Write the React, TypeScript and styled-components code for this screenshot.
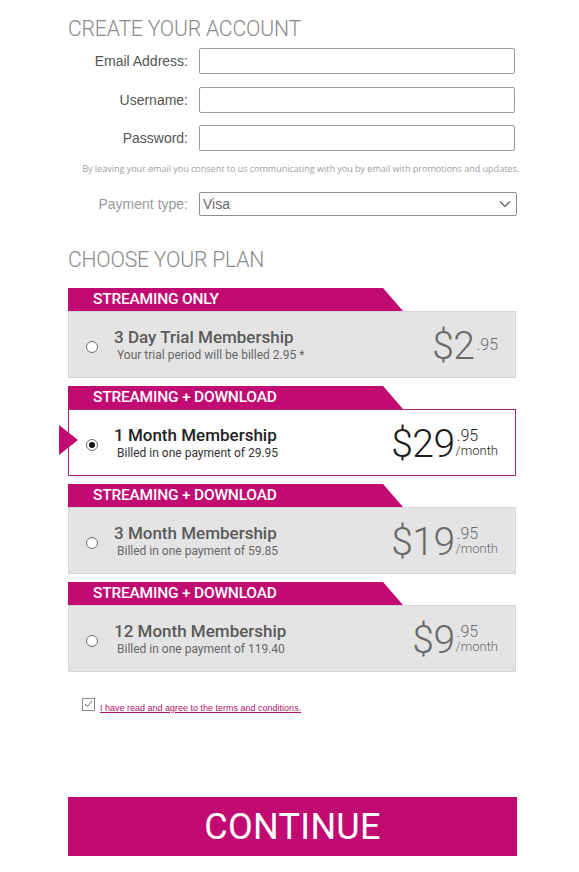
import React from "react";
import styled, { createGlobalStyle } from "styled-components";

const MAGENTA = "#c20b72";

const Global = createGlobalStyle`
  html, body { margin: 0; padding: 0; background: #fff; }
  body { font-family: Roboto, "Liberation Sans", Arial, sans-serif; }
  * { box-sizing: border-box; }
`;

const Page = styled.div`
  width: 579px;
  padding: 16px 0 0 68px;
`;

const Content = styled.div`
  width: 449px;
  display: flex;
  flex-direction: column;
`;

const Heading = styled.h2`
  margin: 0;
  font-family: Roboto, sans-serif;
  font-weight: 300;
  font-size: 21.2px;
  line-height: 26px;
  color: #8a8a8a;
  letter-spacing: -0.2px;
`;

const FormGrid = styled.div`
  display: grid;
  grid-template-columns: 120px 318px;
  column-gap: 11px;
  row-gap: 12.5px;
  align-items: center;
  margin-top: 6px;
`;

const Label = styled.label<{ $light?: boolean }>`
  font-family: "Liberation Sans", Arial, sans-serif;
  font-size: 14px;
  color: ${(p) => (p.$light ? "#9a9a9a" : "#555")};
  text-align: right;
`;

const TextInput = styled.input`
  width: 316px;
  height: 26px;
  border: 1px solid #9a9a9a;
  border-radius: 2px;
  background: #fff;
  padding: 0 4px;
  font-family: "Liberation Sans", Arial, sans-serif;
  font-size: 14px;
`;

const Consent = styled.p`
  margin: 12px -2px 0 0;
  font-family: "Open Sans", sans-serif;
  font-size: 9.1px;
  line-height: 12px;
  color: #a0a0a0;
  text-align: right;
  letter-spacing: -0.05px;
  white-space: nowrap;
`;

const PaymentRow = styled(FormGrid)`
  margin-top: 17px;
`;

const SelectBox = styled.div`
  width: 318px;
  height: 24px;
  border: 1px solid #8f8f8f;
  border-radius: 2px;
  display: flex;
  align-items: center;
  padding: 0 0 0 3px;
  font-family: "Liberation Sans", Arial, sans-serif;
  font-size: 14px;
  color: #666;
  justify-content: space-between;
`;

const Chevron = styled.svg`
  width: 12px;
  height: 8px;
  margin-right: 5px;
`;

const PlanHeading = styled(Heading)`
  margin-top: 31px;
`;

const PlanList = styled.div`
  display: flex;
  flex-direction: column;
  gap: 8px;
  margin-top: 15px;
`;

const Plan = styled.div`
  display: flex;
  flex-direction: column;
  position: relative;
`;

const Banner = styled.div`
  width: 335px;
  height: 23px;
  background: ${MAGENTA};
  clip-path: polygon(0 0, calc(100% - 20px) 0, 100% 100%, 0 100%);
  color: #fff;
  font-family: Roboto, sans-serif;
  font-weight: 500;
  font-size: 15.5px;
  line-height: 23px;
  padding-left: 25px;
  letter-spacing: -0.2px;
`;

const Card = styled.div<{ $selected?: boolean }>`
  width: 448px;
  height: 67px;
  display: grid;
  grid-template-columns: 12px 1fr auto;
  column-gap: 16px;
  align-items: center;
  padding: 0 17px 0 17px;
  background: ${(p) => (p.$selected ? "#fff" : "#e4e4e4")};
  border: 1px solid ${(p) => (p.$selected ? "#a8296f" : "#d6d6d6")};
`;

const Pointer = styled.div`
  position: absolute;
  left: -9px;
  top: 39px;
  width: 0;
  height: 0;
  border-top: 15px solid transparent;
  border-bottom: 15px solid transparent;
  border-left: 19px solid ${MAGENTA};
`;

const Radio = styled.span<{ $checked?: boolean }>`
  width: 12px;
  height: 12px;
  border-radius: 50%;
  border: 1px solid #6e6e6e;
  background: #fff;
  display: flex;
  align-items: center;
  justify-content: center;
  margin-top: 4px;
  &::after {
    content: "";
    width: 6px;
    height: 6px;
    border-radius: 50%;
    background: ${(p) => (p.$checked ? "#111" : "transparent")};
  }
`;

const Info = styled.div`
  display: flex;
  flex-direction: column;
  gap: 1px;
`;

const PlanTitle = styled.div<{ $selected?: boolean }>`
  font-family: Roboto, sans-serif;
  font-weight: 500;
  font-size: 17px;
  line-height: 20px;
  color: ${(p) => (p.$selected ? "#222" : "#5a5a5a")};
`;

const PlanSub = styled.div<{ $selected?: boolean }>`
  font-family: Roboto, sans-serif;
  font-size: 12px;
  line-height: 15px;
  padding-left: 3px;
  color: ${(p) => (p.$selected ? "#333" : "#666")};
`;

const Price = styled.div<{ $selected?: boolean }>`
  display: flex;
  align-items: center;
  color: ${(p) => (p.$selected ? "#1e1e1e" : "#6a6a6a")};
  font-family: Roboto, sans-serif;
  font-weight: 300;
  margin-top: 2px;
`;

const Dollars = styled.span`
  font-size: 39px;
  line-height: 36px;
  letter-spacing: -0.5px;
`;

const Cents = styled.span<{ $solo?: boolean }>`
  display: flex;
  flex-direction: column;
  align-self: stretch;
  justify-content: flex-start;
  padding-top: ${(p) => (p.$solo ? "8px" : "1px")};
  margin-left: 2px;
`;

const CentsTop = styled.span`
  font-size: 16px;
  line-height: 17px;
`;

const PerMonth = styled.span`
  font-size: 13px;
  line-height: 14px;
  margin-left: -1px;
`;

const Terms = styled.div`
  display: flex;
  align-items: center;
  gap: 5px;
  margin: 27px 0 0 14px;
`;

const Check = styled.span`
  width: 13px;
  height: 13px;
  border: 1px solid #8a8a8a;
  background: #fff;
  display: flex;
  align-items: center;
  justify-content: center;
  margin-top: -4px;
`;

const TermsLink = styled.a`
  font-family: "Liberation Sans", Arial, sans-serif;
  font-size: 9px;
  color: #b3126f;
  text-decoration: underline;
  margin-top: 4px;
`;

const Continue = styled.button`
  margin-top: 84px;
  width: 449px;
  height: 59px;
  border: 0;
  background: ${MAGENTA};
  color: #fff;
  font-family: Roboto, sans-serif;
  font-weight: 400;
  font-size: 36px;
  letter-spacing: 0.3px;
  padding: 0;
  cursor: pointer;
`;

type PlanData = {
  banner: string;
  title: string;
  sub: string;
  dollars: string;
  cents: string;
  monthly: boolean;
  selected?: boolean;
};

const plans: PlanData[] = [
  { banner: "STREAMING ONLY", title: "3 Day Trial Membership", sub: "Your trial period will be billed 2.95 *", dollars: "$2", cents: ".95", monthly: false },
  { banner: "STREAMING + DOWNLOAD", title: "1 Month Membership", sub: "Billed in one payment of 29.95", dollars: "$29", cents: ".95", monthly: true, selected: true },
  { banner: "STREAMING + DOWNLOAD", title: "3 Month Membership", sub: "Billed in one payment of 59.85", dollars: "$19", cents: ".95", monthly: true },
  { banner: "STREAMING + DOWNLOAD", title: "12 Month Membership", sub: "Billed in one payment of 119.40", dollars: "$9", cents: ".95", monthly: true },
];

export default function App() {
  return (
    <>
      <Global />
      <Page>
        <Content>
          <Heading>CREATE YOUR ACCOUNT</Heading>
          <FormGrid>
            <Label>Email Address:</Label>
            <TextInput type="text" />
            <Label>Username:</Label>
            <TextInput type="text" />
            <Label>Password:</Label>
            <TextInput type="password" />
          </FormGrid>
          <Consent>By leaving your email you consent to us communicating with you by email with promotions and updates.</Consent>
          <PaymentRow>
            <Label $light>Payment type:</Label>
            <SelectBox>
              <span>Visa</span>
              <Chevron viewBox="0 0 12 8">
                <path d="M1 1.5 L6 6.5 L11 1.5" fill="none" stroke="#555" strokeWidth="1.1" />
              </Chevron>
            </SelectBox>
          </PaymentRow>
          <PlanHeading>CHOOSE YOUR PLAN</PlanHeading>
          <PlanList>
            {plans.map((p, i) => (
              <Plan key={i}>
                <Banner>{p.banner}</Banner>
                {p.selected && <Pointer />}
                <Card $selected={p.selected}>
                  <Radio $checked={p.selected} />
                  <Info>
                    <PlanTitle $selected={p.selected}>{p.title}</PlanTitle>
                    <PlanSub $selected={p.selected}>{p.sub}</PlanSub>
                  </Info>
                  <Price $selected={p.selected}>
                    <Dollars>{p.dollars}</Dollars>
                    <Cents $solo={!p.monthly}>
                      <CentsTop>{p.cents}</CentsTop>
                      {p.monthly && <PerMonth>/month</PerMonth>}
                    </Cents>
                  </Price>
                </Card>
              </Plan>
            ))}
          </PlanList>
          <Terms>
            <Check>
              <svg width="9" height="8" viewBox="0 0 9 8">
                <path d="M1 4 L3.5 6.5 L8 1" fill="none" stroke="#666" strokeWidth="1" />
              </svg>
            </Check>
            <TermsLink href="#">I have read and agree to the terms and conditions.</TermsLink>
          </Terms>
          <Continue>CONTINUE</Continue>
        </Content>
      </Page>
    </>
  );
}
